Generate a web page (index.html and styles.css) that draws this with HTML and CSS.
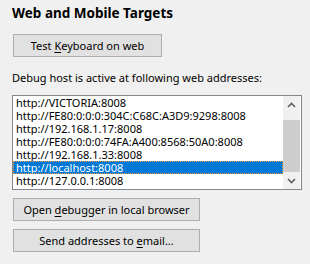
FILE: index.html
```html
<!DOCTYPE html>
<html lang="en">
  <head>
    <meta charset="UTF-8" />
    <title>Web and Mobile Targets</title>
    <link rel="stylesheet" href="styles.css">
  </head>
  <body>
    <div class="panel">
      <h1 class="title">Web and Mobile Targets</h1>

      <button class="btn btn-test">Test <u>K</u>eyboard on web</button>

      <p class="hint">Debug host is active at following web addresses:</p>

      <div class="listbox">
        <ul class="items">
          <li>http://VICTORIA:8008</li>
          <li>http://FE80:0:0:0:304C:C68C:A3D9:9298:8008</li>
          <li>http://192.168.1.17:8008</li>
          <li>http://FE80:0:0:0:74FA:A400:8568:50A0:8008</li>
          <li>http://192.168.1.33:8008</li>
          <li class="selected">http://localhost:8008</li>
          <li>http://127.0.0.1:8008</li>
        </ul>
        <div class="scrollbar">
          <div class="arrow">
            <svg width="9" height="6" viewBox="0 0 9 6"><polyline points="1,5 4.5,1.5 8,5" /></svg>
          </div>
          <div class="track"><div class="thumb"></div></div>
          <div class="arrow">
            <svg width="9" height="6" viewBox="0 0 9 6"><polyline points="1,1 4.5,4.5 8,1" /></svg>
          </div>
        </div>
      </div>

      <div class="actions">
        <button class="btn btn-wide">Open <u>d</u>ebugger in local browser</button>
        <button class="btn btn-wide">Send addresses to <u>e</u>mail...</button>
      </div>
    </div>
  </body>
</html>
```

FILE: styles.css
```css
body {
  margin: 0;
  background: #f0f0f0;
  font-family: "Noto Sans", "Open Sans", sans-serif;
  font-size: 11px;
  color: #000;
}

.panel {
  padding: 4px 9px 0 12px;
}

.title {
  margin: 0;
  font-size: 13.5px;
  font-weight: bold;
  line-height: 18px;
}

.btn {
  display: block;
  font-family: inherit;
  font-size: 11px;
  line-height: 15px;
  color: #000;
  background: #e1e1e1;
  border: 1px solid #adadad;
  padding: 0;
  height: 23px;
  margin: 0 0 0 1px;
}

.btn u {
  text-underline-offset: 2px;
}

.btn-test {
  width: 149px;
  margin-top: 12px;
}

.hint {
  margin: 13px 0 0;
  line-height: 15px;
}

.listbox {
  display: flex;
  margin-top: 10px;
  width: 290px;
  height: 95px;
  box-sizing: border-box;
  border: 1px solid #828790;
  background: #fff;
}

.items {
  list-style: none;
  margin: 0;
  padding: 0;
  flex-grow: 1;
}

.items li {
  height: 13px;
  line-height: 13px;
  padding-left: 3px;
  white-space: nowrap;
  overflow: hidden;
  box-sizing: border-box;
}

.items li.selected {
  background: #0078d7;
  color: #fff;
  border: 1px dotted #f29a3a;
  line-height: 11px;
  padding-left: 2px;
}

.scrollbar {
  width: 17px;
  display: flex;
  flex-direction: column;
  background: #f0f0f0;
  margin-right: 1px;
}

.arrow {
  height: 17px;
  display: flex;
  align-items: center;
  justify-content: center;
}

.arrow svg polyline {
  fill: none;
  stroke: #606060;
  stroke-width: 1.6;
}

.track {
  flex-grow: 1;
  padding-top: 7px;
}

.thumb {
  height: 52px;
  background: #cdcdcd;
}

.actions {
  display: flex;
  flex-direction: column;
  gap: 8px;
  margin-top: 8px;
}

.btn-wide {
  width: 187px;
}
```
